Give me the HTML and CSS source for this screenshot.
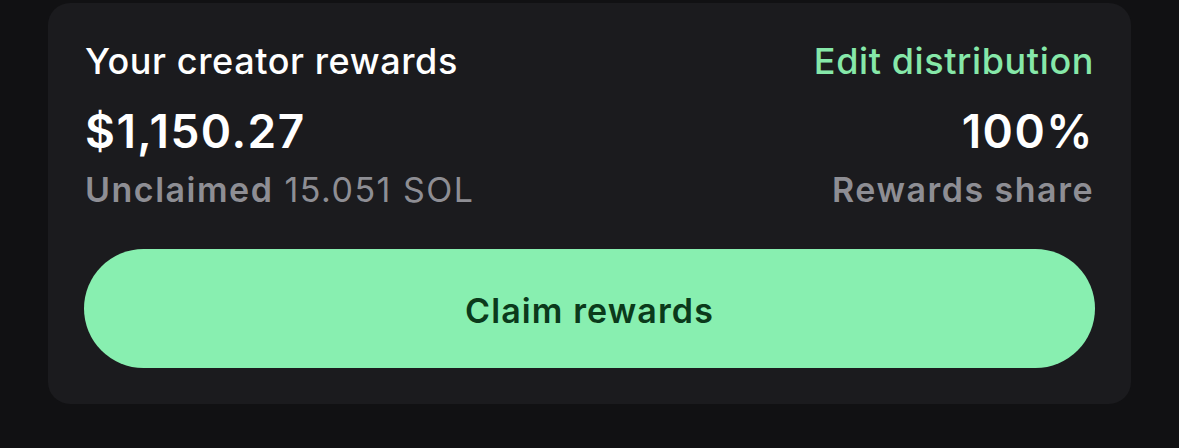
FILE: index.html
```html
<!DOCTYPE html>
<html lang="en">
<head>
<meta charset="utf-8">
<title>Creator rewards</title>
<link rel="stylesheet" href="styles.css">
</head>
<body>
<section class="card">
  <div class="stats">
    <div class="col col-left">
      <div class="title">Your creator rewards</div>
      <div class="amount">$1,150.27</div>
      <div class="sub"><span class="sub-label">Unclaimed</span> 15.051 SOL</div>
    </div>
    <div class="col col-right">
      <a class="link" href="#">Edit distribution</a>
      <div class="amount">100%</div>
      <div class="sub sub-label">Rewards share</div>
    </div>
  </div>
  <button class="claim" type="button">Claim rewards</button>
</section>
</body>
</html>
```

FILE: styles.css
```css
html, body {
  margin: 0;
  padding: 0;
}
body {
  background: #111113;
  font-family: Inter, "Noto Sans", "Liberation Sans", sans-serif;
  height: 448px;
  overflow: hidden;
}
.card {
  margin: 3px 48px 0 48px;
  padding: 36px 36px 36px 36px;
  background: #1b1b1e;
  border-radius: 22px;
}
.stats {
  display: flex;
  justify-content: space-between;
}
.col {
  display: flex;
  flex-direction: column;
}
.col-left {
  padding-left: 1px;
}
.col-right {
  align-items: flex-end;
  margin-right: 1px;
}
.title, .link {
  font-size: 36px;
  line-height: 44px;
  font-weight: 500;
  color: #ffffff;
  letter-spacing: 0.6px;
}
.link {
  color: #86e8a9;
  text-decoration: none;
}
.amount {
  margin-top: 20px;
  font-size: 46px;
  line-height: 56px;
  font-weight: 600;
  color: #ffffff;
  letter-spacing: 1.5px;
}
.sub {
  margin-top: 10px;
  font-size: 34px;
  line-height: 42px;
  font-weight: 400;
  color: #8e8e94;
  letter-spacing: 1.5px;
}
.sub-label {
  font-weight: 600;
}
.claim {
  display: block;
  width: 100%;
  margin-top: 38px;
  height: 119px;
  border: none;
  border-radius: 60px;
  background: #88efb0;
  color: #0b3a1b;
  font-family: inherit;
  font-size: 34px;
  font-weight: 600;
  letter-spacing: 1.1px;
  padding-top: 4px;
  cursor: pointer;
}
```
